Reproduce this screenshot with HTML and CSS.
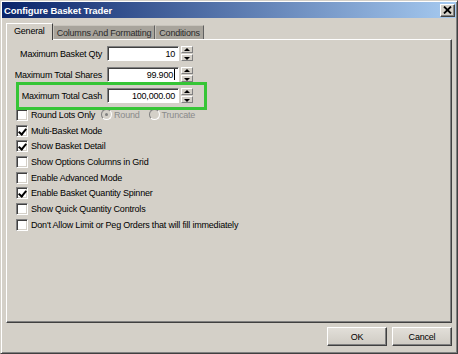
FILE: index.html
```html
<!DOCTYPE html>
<html lang="en">
<head>
  <meta charset="UTF-8">
  <title>Configure Basket Trader</title>
  <link rel="stylesheet" href="styles.css">
</head>
<body>

<div class="window">
  <div class="titlebar">
    <span class="title">Configure Basket Trader</span>
    <div class="close">
      <svg width="9" height="8" viewBox="0 0 9 8"><path d="M1 0.5 L8 7.5 M8 0.5 L1 7.5" stroke="#000" stroke-width="1.8"/></svg>
    </div>
  </div>

  <div class="content">
    <!-- Tabs -->
    <div class="tabs">
      <div class="tab active">General</div>
      <div class="tab">Columns And Formatting</div>
      <div class="tab">Conditions</div>
    </div>

    <div class="panel">
      <div class="field">
        <label class="fieldLabel">Maximum Basket Qty</label>
        <div class="edit">10</div>
        <div class="spin"><span class="up"></span><span class="down"></span></div>
      </div>
      <div class="field">
        <label class="fieldLabel">Maximum Total Shares</label>
        <div class="edit">99.900<i class="caret"></i></div>
        <div class="spin"><span class="up"></span><span class="down"></span></div>
      </div>

      <!-- highlighted box -->
      <div class="highlight">
        <div class="field">
          <label class="fieldLabel inner">Maximum Total Cash</label>
          <div class="edit">100,000.00</div>
          <div class="spin"><span class="up"></span><span class="down"></span></div>
        </div>
      </div>

      <div class="checks">
        <div class="check">
          <span class="box"></span>Round Lots Only
          <span class="radio disabled on"></span><span class="dim">Round</span>
          <span class="radio disabled"></span><span class="dim">Truncate</span>
        </div>
        <div class="check"><span class="box checked"></span>Multi-Basket Mode</div>
        <div class="check"><span class="box checked"></span>Show Basket Detail</div>
        <div class="check"><span class="box"></span>Show Options Columns in Grid</div>
        <div class="check"><span class="box"></span>Enable Advanced Mode</div>
        <div class="check"><span class="box checked"></span>Enable Basket Quantity Spinner</div>
        <div class="check"><span class="box"></span>Show Quick Quantity Controls</div>
        <div class="check"><span class="box"></span>Don't Allow Limit or Peg Orders that will fill immediately</div>
      </div>
    </div>

    <div class="buttons">
      <div class="btn">OK</div>
      <div class="btn">Cancel</div>
    </div>
  </div>
</div>

</body>
</html>
```

FILE: styles.css
```css
* {
  margin: 0;
  padding: 0;
  box-sizing: border-box;
}
body {
  font-family: "Liberation Sans", Arial, sans-serif;
  font-size: 9px;
  letter-spacing: -0.2px;
  color: #000;
  background: #d4d0c8;
}
.window {
  width: 458px;
  height: 354px;
  background: #d4d0c8;
  border: 1px solid;
  border-color: #d4d0c8 #404040 #404040 #d4d0c8;
  box-shadow: inset 1px 1px #fff, inset -1px -1px #808080;
  padding: 1px;
}
.titlebar {
  height: 16px;
  background: linear-gradient(to right, #0a246a, #a6caf0);
  display: flex;
  align-items: center;
  justify-content: space-between;
  padding: 0 1px 0 2px;
}
.title {
  color: #fff;
  font-weight: bold;
  font-size: 9.5px;
  letter-spacing: -0.1px;
}
.close {
  width: 15px;
  height: 13px;
  background: #d4d0c8;
  border: 1px solid;
  border-color: #fff #404040 #404040 #fff;
  box-shadow: inset -1px -1px #808080;
  display: flex;
  align-items: center;
  justify-content: center;
}
.content {
  padding: 5px 4px 0 4px;
}
.tabs {
  display: flex;
  align-items: flex-end;
  height: 16px;
  position: relative;
  z-index: 1;
}
.tab {
  height: 14px;
  padding: 0 3px;
  background: #a8a49c;
  color: #2a2a2a;
  border: 1px solid;
  border-bottom: none;
  border-color: #c8c4bc #606060 #606060 #c8c4bc;
  display: flex;
  align-items: center;
}
.tab.active {
  height: 17px;
  margin-bottom: -1px;
  background: #d4d0c8;
  color: #000;
  border-color: #fff #404040 #404040 #fff;
  padding: 0 7px 2px 7px;
}
.panel {
  height: 284px;
  border: 1px solid;
  border-color: #fff #404040 #404040 #fff;
  box-shadow: inset -1px -1px #808080;
  padding-top: 6px;
}
.field {
  display: flex;
  align-items: center;
  height: 15px;
  margin-bottom: 6px;
}
.panel > .field:nth-child(2) {
  margin-bottom: 0;
}
.fieldLabel {
  width: 96px;
  text-align: right;
  padding-right: 1px;
}
.fieldLabel.inner {
  width: 84px;
}
.edit {
  width: 72px;
  height: 15px;
  margin-left: 4px;
  background: #fff;
  border: 1px solid;
  border-color: #808080 #fff #fff #808080;
  box-shadow: inset 1px 1px #404040;
  text-align: right;
  padding: 1px 3px 0 0;
  line-height: 12px;
}
.caret {
  display: inline-block;
  width: 1px;
  height: 11px;
  background: #000;
  vertical-align: -2px;
  margin-left: 1px;
}
.spin {
  width: 12px;
  height: 15px;
  margin-left: 2px;
  display: flex;
  flex-direction: column;
  gap: 1px;
}
.spin span {
  flex: 1;
  background: #d4d0c8;
  border: 1px solid;
  border-color: #fff #808080 #808080 #fff;
  position: relative;
}
.spin span::after {
  content: "";
  position: absolute;
  left: 2px;
  border-left: 3px solid transparent;
  border-right: 3px solid transparent;
}
.spin .up::after {
  top: 1px;
  border-bottom: 3px solid #000;
}
.spin .down::after {
  top: 2px;
  border-top: 3px solid #000;
}
.highlight {
  width: 191px;
  margin-left: 9px;
  border: 3px solid #36c536;
  padding: 3px 0 4px 0;
  position: relative;
  z-index: 1;
}
.highlight .field {
  margin-bottom: 0;
}
.checks {
  margin-top: -3px;
  padding-left: 9px;
}
.check {
  height: 15.7px;
  display: flex;
  align-items: center;
}
.box {
  width: 12px;
  height: 12px;
  margin-right: 3px;
  background: #fff;
  border: 1px solid;
  border-color: #808080 #fff #fff #808080;
  box-shadow: inset 1px 1px #404040, inset -1px -1px #d4d0c8;
  position: relative;
}
.box.checked::after {
  content: "";
  position: absolute;
  left: 3px;
  top: 1px;
  width: 3px;
  height: 6px;
  border-right: 2px solid #000;
  border-bottom: 2px solid #000;
  transform: rotate(40deg);
}
.radio {
  width: 11px;
  height: 11px;
  border-radius: 50%;
  margin: 0 2px 0 6px;
  background: #d4d0c8;
  border: 1px solid;
  border-color: #808080 #fff #fff #808080;
  position: relative;
}
.radio.on::after {
  content: "";
  position: absolute;
  left: 3px;
  top: 3px;
  width: 3px;
  height: 3px;
  border-radius: 50%;
  background: #808080;
}
.radio + .dim + .radio {
  margin-left: 9px;
}
.dim {
  color: #8a8a8a;
}
.buttons {
  display: flex;
  justify-content: flex-end;
  gap: 5px;
  margin-top: 4px;
}
.btn {
  width: 60px;
  height: 19px;
  background: linear-gradient(#e2dfd9, #cfcbc3);
  border: 1px solid;
  border-color: #fff #404040 #404040 #fff;
  box-shadow: inset -1px -1px #808080;
  display: flex;
  align-items: center;
  justify-content: center;
}
```
